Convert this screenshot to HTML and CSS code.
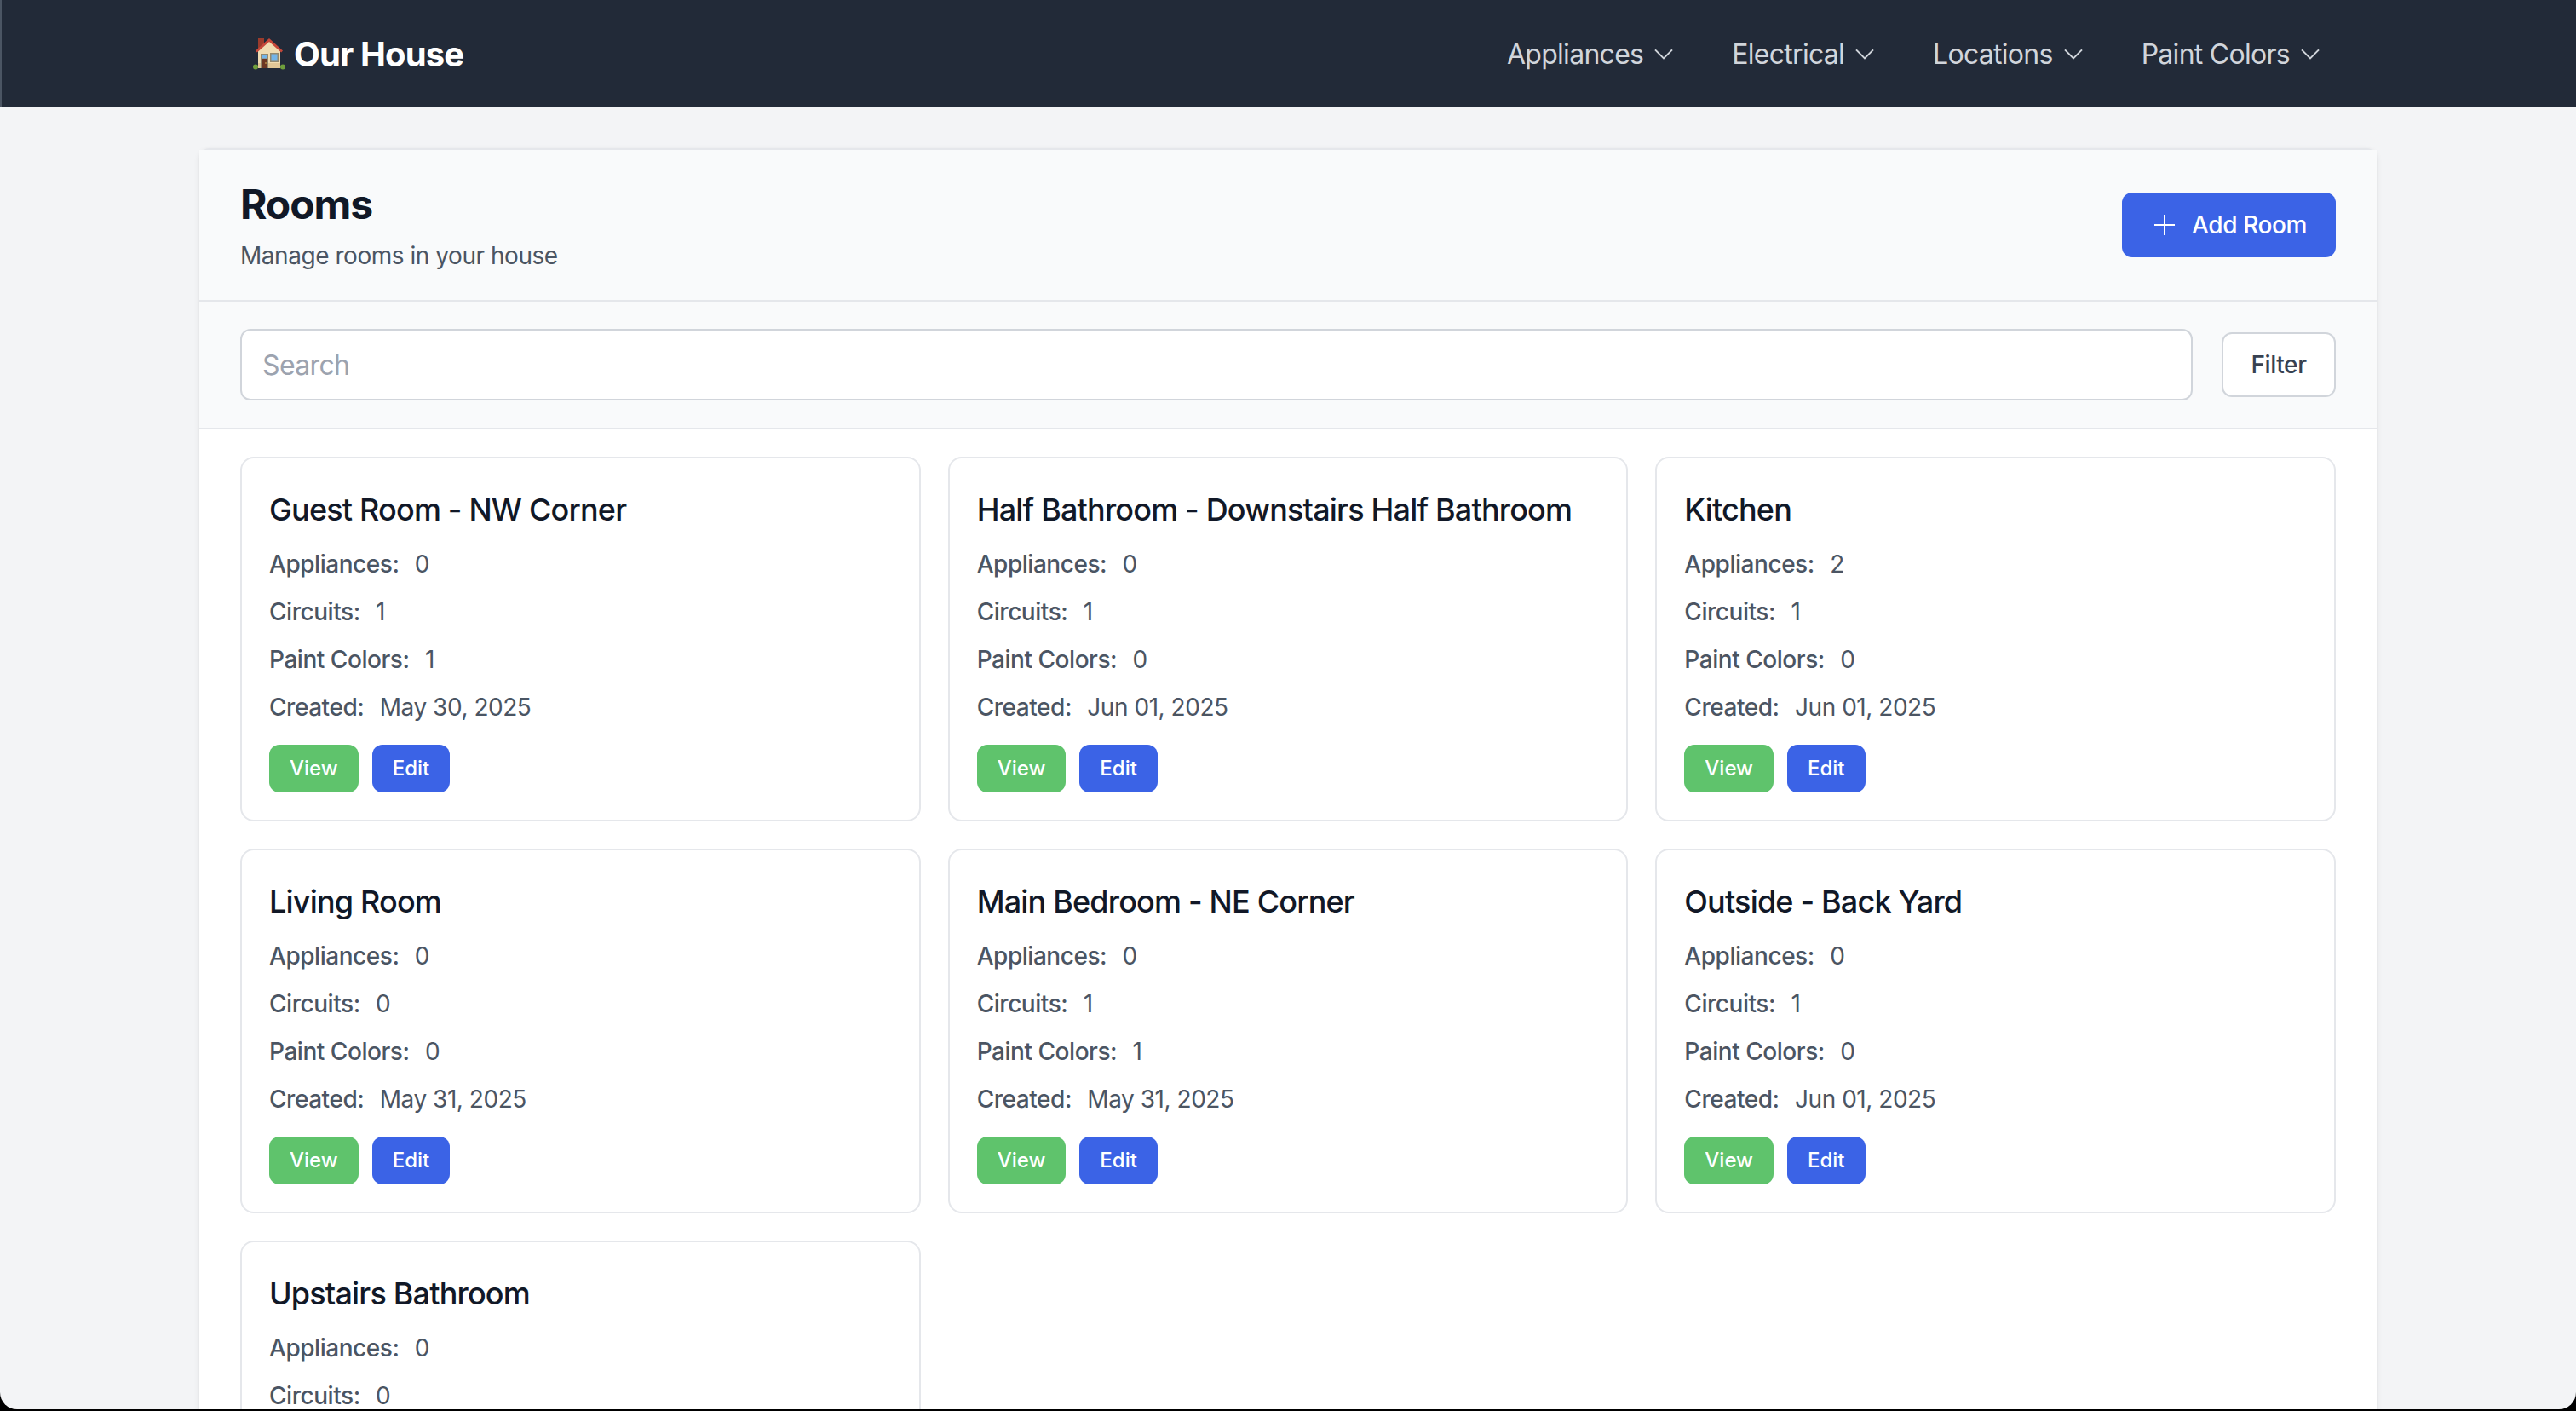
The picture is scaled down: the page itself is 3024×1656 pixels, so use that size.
FILE: index.html
```html
<!DOCTYPE html>
<html lang="en">
<head>
  <meta charset="UTF-8">
  <title>Our House</title>
  <link rel="stylesheet" href="styles.css">
</head>
<body>
  <div class="window">
    <nav class="topbar">
      <div class="topbar-inner">
        <a class="brand" href="#">
          <svg class="brand-icon" viewBox="0 0 38 38" aria-hidden="true">
            <path d="M6 1h7v9l-7 6z" fill="#9a3b2c"/>
            <path d="M6 14 19 4l13 10v22H6z" fill="#f0dcb2"/>
            <path d="M6 30h26v6H6z" fill="#e2c797"/>
            <path d="M3 15.500 19 1l16 14.500-1.800 2L19 5 4.800 17.500z" fill="#c6483a"/>
            <rect x="9" y="19" width="9" height="17" fill="#93896f"/>
            <rect x="10.500" y="25" width="6" height="11" fill="#6d3723"/>
            <rect x="11" y="20.500" width="5" height="4" fill="#74b4e8"/>
            <circle cx="15" cy="30" r=".8" fill="#e6c35c"/>
            <rect x="20" y="18" width="10" height="11" fill="#93896f"/>
            <rect x="21.500" y="19.500" width="7" height="8" fill="#74b4e8"/>
            <circle cx="3" cy="34.500" r="3" fill="#6f9e3c"/>
            <circle cx="35" cy="34.500" r="3" fill="#6f9e3c"/>
          </svg>
          <span>Our House</span>
        </a>
        <ul class="menu">
          <li class="menu-item">Appliances <svg class="chevron" viewBox="0 0 24 24"><path d="m4.500 8.500 7.500 7.500 7.500-7.500"/></svg></li>
          <li class="menu-item">Electrical <svg class="chevron" viewBox="0 0 24 24"><path d="m4.500 8.500 7.500 7.500 7.500-7.500"/></svg></li>
          <li class="menu-item">Locations <svg class="chevron" viewBox="0 0 24 24"><path d="m4.500 8.500 7.500 7.500 7.500-7.500"/></svg></li>
          <li class="menu-item">Paint Colors <svg class="chevron" viewBox="0 0 24 24"><path d="m4.500 8.500 7.500 7.500 7.500-7.500"/></svg></li>
        </ul>
      </div>
    </nav>

    <main class="panel">
      <header class="panel-head">
        <div>
          <h1>Rooms</h1>
          <p>Manage rooms in your house</p>
        </div>
        <button class="btn-add">
          <svg class="plus" viewBox="0 0 24 24"><path d="M12 0v24M0 12h24"/></svg>
          Add Room
        </button>
      </header>

      <div class="search-row">
        <input class="search" type="text" placeholder="Search">
        <button class="btn-filter">Filter</button>
      </div>

      <div class="room-grid">
        <article class="room">
          <h3>Guest Room - NW Corner</h3>
          <p><b>Appliances:</b> 0</p>
          <p><b>Circuits:</b> 1</p>
          <p><b>Paint Colors:</b> 1</p>
          <p><b>Created:</b> May 30, 2025</p>
          <div class="room-actions"><a class="btn-view">View</a><a class="btn-edit">Edit</a></div>
        </article>
        <article class="room">
          <h3>Half Bathroom - Downstairs Half Bathroom</h3>
          <p><b>Appliances:</b> 0</p>
          <p><b>Circuits:</b> 1</p>
          <p><b>Paint Colors:</b> 0</p>
          <p><b>Created:</b> Jun 01, 2025</p>
          <div class="room-actions"><a class="btn-view">View</a><a class="btn-edit">Edit</a></div>
        </article>
        <article class="room">
          <h3>Kitchen</h3>
          <p><b>Appliances:</b> 2</p>
          <p><b>Circuits:</b> 1</p>
          <p><b>Paint Colors:</b> 0</p>
          <p><b>Created:</b> Jun 01, 2025</p>
          <div class="room-actions"><a class="btn-view">View</a><a class="btn-edit">Edit</a></div>
        </article>
        <article class="room">
          <h3>Living Room</h3>
          <p><b>Appliances:</b> 0</p>
          <p><b>Circuits:</b> 0</p>
          <p><b>Paint Colors:</b> 0</p>
          <p><b>Created:</b> May 31, 2025</p>
          <div class="room-actions"><a class="btn-view">View</a><a class="btn-edit">Edit</a></div>
        </article>
        <article class="room">
          <h3>Main Bedroom - NE Corner</h3>
          <p><b>Appliances:</b> 0</p>
          <p><b>Circuits:</b> 1</p>
          <p><b>Paint Colors:</b> 1</p>
          <p><b>Created:</b> May 31, 2025</p>
          <div class="room-actions"><a class="btn-view">View</a><a class="btn-edit">Edit</a></div>
        </article>
        <article class="room">
          <h3>Outside - Back Yard</h3>
          <p><b>Appliances:</b> 0</p>
          <p><b>Circuits:</b> 1</p>
          <p><b>Paint Colors:</b> 0</p>
          <p><b>Created:</b> Jun 01, 2025</p>
          <div class="room-actions"><a class="btn-view">View</a><a class="btn-edit">Edit</a></div>
        </article>
        <article class="room">
          <h3>Upstairs Bathroom</h3>
          <p><b>Appliances:</b> 0</p>
          <p><b>Circuits:</b> 0</p>
          <p><b>Paint Colors:</b> 0</p>
          <p><b>Created:</b> Jun 01, 2025</p>
          <div class="room-actions"><a class="btn-view">View</a><a class="btn-edit">Edit</a></div>
        </article>
      </div>
    </main>
  </div>
</body>
</html>
```

FILE: styles.css
```css
* { box-sizing: border-box; }
html, body { margin: 0; height: 100%; background: #000; overflow: hidden; }
body { font-family: Inter, "Liberation Sans", sans-serif; color: #111827; }
.window { height: 1654px; background: #f3f4f6; border-radius: 0 0 20px 20px; overflow: hidden; }

.topbar { height: 126px; background: #222a38; box-shadow: inset 2px 0 0 #4b5563; }
.topbar-inner { width: 2556px; height: 100%; margin: 0 auto; padding: 0 64px 0 63px; display: flex; align-items: center; justify-content: space-between; }
.brand { display: flex; align-items: center; gap: 10px; color: #fff; font-size: 40px; font-weight: 700; letter-spacing: -0.86px; text-decoration: none; }
.brand-icon { width: 38px; height: 38px; }
.menu { display: flex; gap: 64px; margin: 0 -2px 0 0; padding: 0; list-style: none; }
.menu-item { display: flex; align-items: center; gap: 8px; color: #d1d5db; font-size: 32px; letter-spacing: -0.72px; }
.chevron { width: 32px; height: 32px; fill: none; stroke: currentColor; stroke-width: 1.5; }

.panel { width: 2556px; margin: 48px auto 0; background: #fff; border-top: 2px solid #e5e7eb; border-radius: 12px; box-shadow: 0 2px 6px rgba(0, 0, 0, 0.1); }
.panel-head { display: flex; justify-content: space-between; align-items: center; padding: 32px 48px; background: #f9fafb; border-bottom: 2px solid #e5e7eb; }
.panel-head h1 { margin: 0; font-size: 48px; line-height: 64px; font-weight: 700; letter-spacing: -1.1px; }
.panel-head p { margin: 8px 0 0; font-size: 28px; line-height: 40px; color: #4b5563; letter-spacing: -0.46px; }
.btn-add { display: flex; align-items: center; gap: 20px; height: 76px; padding: 0 34px 0 38px; border: 0; border-radius: 12px; background: #3b63e6; color: #fff; font: 500 28px Inter, sans-serif; letter-spacing: -0.4px; }
.plus { width: 24px; height: 24px; fill: none; stroke: #fff; stroke-width: 2; }

.search-row { display: flex; align-items: center; gap: 34px; padding: 32px 48px; background: #f9fafb; border-bottom: 2px solid #e5e7eb; }
.search { flex: 1; height: 84px; padding: 0 24px; border: 2px solid #d1d5db; border-radius: 12px; font: 32px Inter, sans-serif; letter-spacing: -0.64px; }
.search::placeholder { color: #9ca3af; }
.btn-filter { width: 134px; height: 76px; border: 2px solid #d1d5db; border-radius: 12px; background: #fff; color: #374151; font: 500 28px Inter, sans-serif; letter-spacing: -0.4px; }

.room-grid { display: grid; grid-template-columns: repeat(3, 1fr); gap: 32px; padding: 32px 48px; }
.room { padding: 32px; border: 2px solid #e5e7eb; border-radius: 16px; background: #fff; }
.room h3 { margin: 0 0 16px; font-size: 36px; line-height: 56px; font-weight: 500; color: #111827; letter-spacing: -0.82px; }
.room p { margin: 0 0 16px; font-size: 28px; line-height: 40px; color: #4b5563; letter-spacing: -0.46px; }
.room b { margin-right: 11px; font-weight: 500; }
.room-actions { display: flex; gap: 16px; margin-top: 24px; }
.btn-view, .btn-edit { padding: 12px 24px; border-radius: 12px; color: #fff; font-size: 24px; line-height: 32px; font-weight: 500; }
.btn-view { background: #5fc36c; }
.btn-edit { background: #3b63e6; }
```
